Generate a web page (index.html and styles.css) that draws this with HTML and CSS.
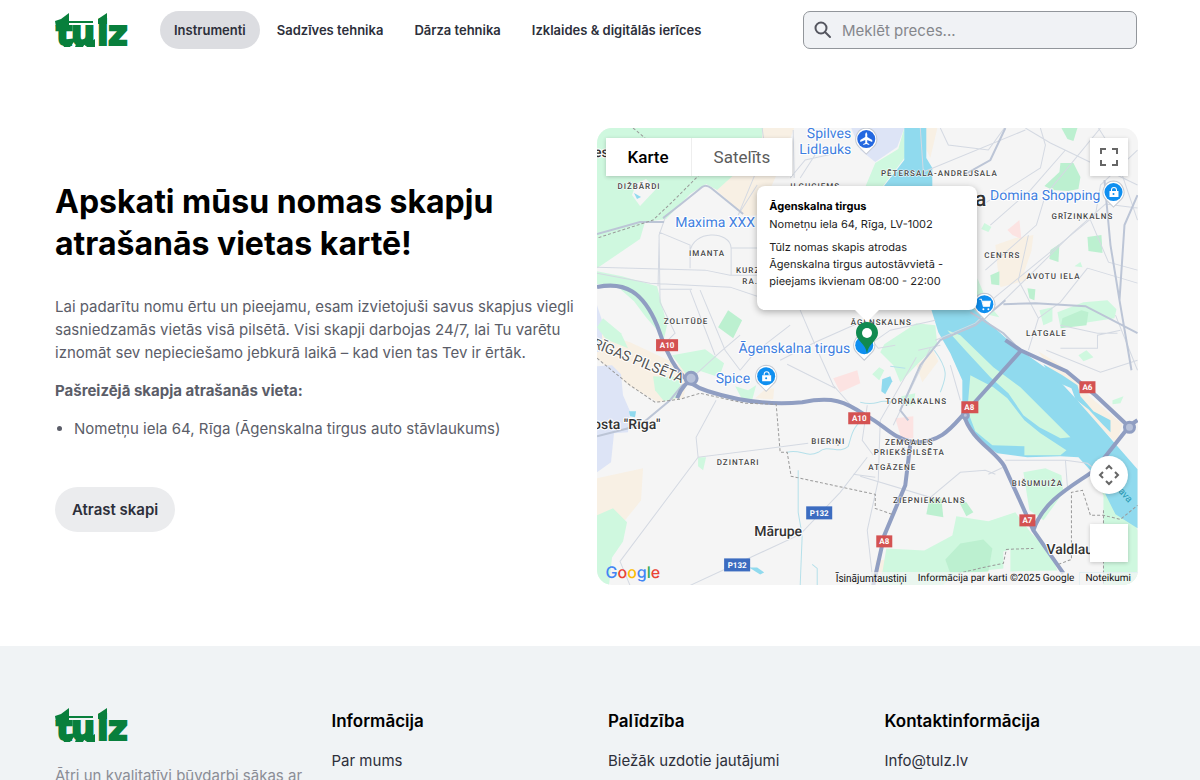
FILE: index.html
```
<!DOCTYPE html>
<html lang="lv">
<head>
    <meta charset="utf-8">
    <title>Tūlz</title>
    <meta name="viewport" content="width=device-width, initial-scale=1.0">
    <link rel="stylesheet" href="styles.css">
</head>
<body>
    <svg class="defs" width="0" height="0" aria-hidden="true">
        <symbol id="logo" viewBox="0 0 76 36">
            <text class="logo-text" x="1 16 42 53" y="33">tulz</text>
            <path d="M0 9 L6 7 L14 1 V9 H38 V11 H14 V15 H1 Z M43 7 L52 1 V12 H43 Z M6 28 L22 26 L15 35 H9 Z M22 30 L32 26 L28 35 H20 Z M30 33 L40 27 V35 H32Z"/>
        </symbol>
        <symbol id="poi" viewBox="0 0 24 28">
            <path class="poi-edge" d="M12 1 a11 11 0 0 1 7 19 L12 27 L5 20 A11 11 0 0 1 12 1Z"/>
            <circle cx="12" cy="12" r="9"/>
        </symbol>
    </svg>

    <header class="header">
        <a class="logo" href="#" aria-label="Tūlz"><svg width="76" height="36"><use href="#logo"/></svg></a>
        <nav class="nav">
            <a class="active" href="#">Instrumenti</a>
            <a href="#">Sadzīves tehnika</a>
            <a href="#">Dārza tehnika</a>
            <a href="#">Izklaides &amp; digitālās ierīces</a>
        </nav>
        <label class="search">
            <svg width="18" height="18" viewBox="0 0 18 18"><circle cx="7" cy="7" r="5.5"/><path d="M11 11 L16 16"/></svg>
            <input type="text" placeholder="Meklēt preces..." aria-label="Meklēt preces">
        </label>
    </header>

    <main class="locker">
        <div class="locker-text">
            <h1>Apskati mūsu nomas skapju atrašanās vietas kartē!</h1>
            <p>Lai padarītu nomu ērtu un pieejamu, esam izvietojuši savus skapjus viegli sasniedzamās vietās visā pilsētā. Visi skapji darbojas 24/7, lai Tu varētu iznomāt sev nepieciešamo jebkurā laikā – kad vien tas Tev ir ērtāk.</p>
            <p><strong>Pašreizējā skapja atrašanās vieta:</strong></p>
            <ul>
                <li>Nometņu iela 64, Rīga (Āgenskalna tirgus auto stāvlaukums)</li>
            </ul>
            <button class="find" type="button">Atrast skapi</button>
        </div>

        <div class="map">
            <svg class="map-canvas" viewBox="597 128 541 457">
                <!-- built-up, sand and airport areas -->
                <g class="sand">
                    <path d="M745 128 H794 L775 178 L758 215 L745 216 L716 190 Z"/>
                    <path d="M597 332 L630 342 L690 370 L683 398 L658 402 L630 386 L597 358Z"/>
                    <path d="M597 478 L643 468 L641 500 L625 520 L597 520Z"/>
                    <path d="M995 245 L1015 238 L1033 235 L1031 251 L1024 271 L1027 280 L1000 287 L997 266Z"/>
                    <path d="M920 128 H937 L930 158 L924 145Z"/>
                    <path d="M916 365 L933 350 L938 361 L922 382Z"/>
                    <path d="M969 404 L982 401 L987 417 L978 423Z"/>
                    <path d="M1038 351 L1060 365 L1078 382 L1090 397 L1122 424 L1116 443 L1098 425 L1082 406 L1074 391 L1054 374Z"/>
                    <path d="M765 389 L774 388 L773 399 L755 398Z"/>
                    <path d="M875 560 L887 559 L888 574 L876 575Z"/>
                </g>
                <g class="airport">
                    <path d="M597 366 L612 365 L621 374 L623 395 L630 411 L628 432 L614 433 L611 462 L597 472Z"/>
                    <path d="M851 128 H904 L897 147 L875 162 L860 150Z"/>
                    <path d="M597 305 L602 320 L602 350 L597 352Z"/>
                </g>
                <g class="red-area">
                    <path d="M833 378 L857 370 L860 383 L840 392Z"/>
                    <path d="M895 418 L913 416 L913 438 L901 438Z"/>
                    <path d="M1007 230 L1019 220 L1021 239 L1012 235Z"/>
                </g>

                <!-- parks and forests -->
                <g class="green">
                    <path d="M597 128 H763 L758 168 L738 171 L717 190 L706 184 L690 194 L666 219 L645 222 L640 239 L618 254 L597 268Z"/>
                    <path d="M597 271 L622 276 L657 286 L667 325 L664 338 L646 317 L634 301 L617 286 L597 284Z"/>
                    <path d="M603 318 L621 333 L628 348 L606 339 L597 327Z"/>
                    <path d="M672 355 L705 349 L724 363 L719 377 L701 371 L686 374Z"/>
                    <path d="M653 376 L681 377 L679 397 L664 401 L655 390Z"/>
                    <path d="M735 386 L748 390 L756 385 L752 400 L742 399Z"/>
                    <path d="M698 457 L706 457 L703 470 L698 466Z"/>
                    <path d="M597 515 L613 508 L627 522 L623 541 L612 557 L609 585 H597Z"/>
                    <path d="M904 128 L905 157 L882 187 L865 187 L875 163 L898 149Z"/>
                    <path d="M984 223 L991 227 L988 232 L981 229Z"/>
                    <path d="M1074 266 L1080 262 L1082 267Z"/>
                    <path d="M1057 312 L1083 302 L1107 300 L1116 309 L1114 318 L1088 322 L1060 327Z"/>
                    <path d="M1039 310 L1052 307 L1052 321 L1043 325Z"/>
                    <path d="M1078 355 L1086 350 L1093 357 L1083 361Z"/>
                    <path d="M1112 400 L1123 396 L1120 403 L1112 404Z"/>
                    <path d="M977 278 L988 304 L999 317 L972 311 L977 290Z"/>
                    <path d="M884 344 L916 323 L935 325 L937 345 L918 363 L900 382 L893 365 L880 352Z"/>
                    <path d="M872 374 L879 367 L884 370 L879 380Z"/>
                    <path d="M955 329 L965 328 L962 338Z"/>
                    <path d="M901 396 L915 393 L913 405 L902 405Z"/>
                    <path d="M1023 472 L1045 468 L1061 475 L1063 492 L1043 520 L1029 510Z"/>
                    <path d="M886 548 L924 550 L952 535 L956 516 L988 521 L1015 512 L1031 533 L1050 552 L1057 570 L1010 571 L1010 549 L1003 551 L1003 568 L984 570 L968 566 L942 585 H880Z"/>
                    <path d="M1090 470 L1106 486 L1128 508 L1137 530 V585 H1103 V495Z"/>
                </g>
                <g class="green-dark">
                    <path d="M728 310 L742 320 L733 338 L718 327Z"/>
                    <path d="M1061 128 H1077 L1073 141 L1067 139Z"/>
                    <path d="M1044 186 L1059 172 L1060 163 L1073 163 L1080 177 L1078 189 L1068 191 L1052 190Z"/>
                    <path d="M1087 237 L1101 235 L1102 253 L1088 251Z"/>
                    <path d="M1050 250 L1059 244 L1058 262 L1049 259Z"/>
                    <path d="M990 275 L999 271 L999 285 L991 284Z"/>
                    <path d="M1027 288 L1035 289 L1034 300 L1029 298Z"/>
                    <path d="M945 559 L960 543 L983 539 L992 548 L988 571 L950 573Z"/>
                    <path d="M929 499 L941 498 L943 517 L926 514Z"/>
                    <path d="M959 502 L966 502 L973 512 L966 516Z"/>
                    <path d="M1062 318 L1081 310 L1088 312 L1086 325 L1060 328Z"/>
                </g>
                <path class="white-area" d="M636 184 L646 179 L656 189 L640 206 L632 195Z"/>

                <!-- Daugava -->
                <g class="water">
                    <path d="M904 128 H926 L926 158 L932 168 V187 H883 L904 160Z"/>
                    <path d="M930 306 H970 L1008 340 L1020 350 L1050 371 L1075 398 L1137 469 V528 L1115 514 L1097 478 L1078 457 L1060 456 L1027 457 L997 453 L979 442 L966 421 L962 404 L962 380 L950 353 L938 332Z"/>
                    <path d="M1043 364 L1062 375 L1077 385 L1080 396 L1093 411 L1110 420 L1110 432 L1102 424 L1088 409 L1075 399 L1071 388 L1052 380Z"/>
                    <path d="M882 379 L890 376 L892 381 L885 394 L881 391Z"/>
                    <path d="M629 411 L636 411 L635 417 L630 416Z"/>
                    <path d="M749 567 L757 567 L764 572 L760 574Z"/>
                    <path d="M634 193 L641 197 L637 199Z"/>
                </g>
                <g class="island">
                    <path d="M947 330 L960 335 L993 367 L1020 387 L1070 437 L1060 438 L1039 427 L1023 415 L1008 393 L990 377 L965 350Z"/>
                    <path d="M970 375 L993 387 L1007 398 L1024 420 L1040 433 L1066 450 L1060 455 L1024 455 L1024 446 L992 445 L975 431 L967 410Z"/>
                </g>
                <g class="stream">
                    <path d="M787 452 C800 448 806 458 818 452 C829 443 838 455 848 446 C852 435 850 427 870 413 M798 470 V512 L802 535 L800 585 M812 564 L817 568 V585"/>
                    <path d="M860 402 C880 407 875 397 895 403 M934 350 C950 372 945 378 940 392 M1079 585 V572 H1137"/>
                    <path d="M890 366 L905 368"/>
                </g>

                <!-- streets -->
                <g class="street">
                    <path d="M658 350 L675 333 L660 302 L659 235 L665 218 M659 232 L690 245 V268 M690 268 V252 C692 230 730 230 731 248 V275 M597 267 L705 270 L730 275 H757 M597 273 L650 283 L730 287 L760 297 M659 240 L658 286 M731 248 H757 M660 289 H692 M690 290 L715 355 M700 290 L725 350 L740 370"/>
                    <path d="M762 128 L765 150 L738 215 M738 215 L757 185 M790 178 L805 160 L850 150 M793 130 L794 178 M800 178 L818 150"/>
                    <path d="M685 384 L720 352 L740 335 M740 370 L755 352 L790 325 M780 360 L815 342 L860 322 M800 310 L815 345 L833 385 L855 410 M787 364 L815 378 L835 388 M857 322 L878 348 L895 345 M860 351 L890 330 L935 320"/>
                    <path d="M716 400 L696 437 L698 457 L808 443 M698 457 L620 561 L630 585 M867 457 L840 492 L800 534 L690 585 M867 405 L862 440 L873 455 M853 474 L875 477 M860 476 L930 497 L960 472 L985 470 L995 474"/>
                    <path d="M920 128 L923 172 L1025 130 M940 128 L948 145 L988 150 L1004 128 M1040 128 L1045 145 L1040 168 L980 206 M1065 150 L1030 190 L990 225 M1100 128 L1045 195 L1036 225 L985 270 M1025 128 L1050 143 L1137 185 M1137 150 L1100 185 L1095 215 L985 305"/>
                    <path d="M1098 128 L1115 155 L1137 220 M1137 208 L1105 204 L1072 233 L1000 304 M1090 220 L1108 262 L1137 270 M1087 268 L1060 302 L1038 318 M1087 268 L1137 283 M1028 235 L1018 280 L1038 318 L1028 350 M1060 325 L1097 333 H1117 M1060 348 H1097 V335 L1120 330 M1115 315 L1137 370 M1046 350 L1100 372 L1137 360"/>
                    <path d="M1005 460 H1065 L1087 463 L1097 471 M988 474 L1005 466 M1067 487 L1065 460 M930 348 L893 425 M916 357 L880 420 L878 480 L867 530 L872 575 M950 365 L960 400 M940 345 L918 350 M935 340 L975 323 L995 304"/>
                </g>
                <g class="street wide">
                    <path d="M663 218 Q680 205 702 187 Q706 184 711 188 L743 214 M597 234 L640 222 H664 M597 436 L640 425 L670 400 L683 384 M1003 304 L1035 303 L1085 306 L1137 333 M1005 128 L990 160 L965 174 M1104 180 L1110 245 L1119 300 L1131 370 M1137 195 L1124 225 L1119 300"/>
                    <path d="M908 420 L900 410 L920 365 L940 340 L975 325 L1005 300 M1020 350 L1003 333 L970 312"/>
                </g>
                <g class="highway">
                    <path d="M597 287 C625 281 643 292 657 325 C669 361 681 383 708 391 C745 403 780 404 802 402 C832 396 845 401 865 415 C885 425 890 437 913 442 C945 443 955 421 970 407 L1021 350"/>
                    <path d="M910 444 L905 485 L884 535 L873 585 M963 413 C970 440 995 450 1004 466 L1033 530 L1063 573 M1033 530 C1043 499 1075 484 1094 470 L1128 427"/>
                    <path d="M1005 340 L1020 350 L1066 371 L1095 395 L1128 426 L1137 420 M677 398 C682 385 690 380 696 375"/>
                </g>
                <circle class="roundabout" cx="691" cy="378" r="6"/>
                <circle class="roundabout" cx="1129" cy="427" r="5"/>
                <circle class="roundabout" cx="965" cy="415" r="3"/>

                <!-- municipality borders -->
                <g class="border">
                    <path d="M633 128 L645 138 M700 174 L672 202 L653 220 L597 238 M597 358 L630 385 L655 402 L680 399 L700 393 L745 403 L776 404 L780 452 L787 452 L791 476 L875 494 V508 L892 514"/>
                    <path d="M958 573 L983 567 L1003 563 L1006 549 L1033 548 M1058 564 L1071 559 V492 L1082 490 L1090 515 H1103 L1120 519 L1137 505"/>
                    <path d="M1103 510 V585"/>
                </g>

                <g class="area">
                    <text x="639" y="189">DIŽBĀRDI</text>
                    <text x="815" y="189">IĻĢUCIEMS</text>
                    <text x="707" y="256">IMANTA</text>
                    <text x="748" y="273">KURZ</text>
                    <text x="750" y="284">RA.</text>
                    <text x="686" y="324">ZOLITŪDE</text>
                    <text x="881" y="325">ĀGENSKALNS</text>
                    <text x="939" y="176">PĒTERSALA-ANDREJSALA</text>
                    <text x="1082" y="219">GRĪZIŅKALNS</text>
                    <text x="1002" y="258">CENTRS</text>
                    <text x="1053" y="279">AVOTU IELA</text>
                    <text x="1046" y="336">LATGALE</text>
                    <text x="916" y="404">TORŅAKALNS</text>
                    <text x="909" y="445">ZEMGALES</text>
                    <text x="909" y="455">PRIEKŠPILSĒTA</text>
                    <text x="892" y="470">ATGĀZENE</text>
                    <text x="929" y="503">ZIEPNIEKKALNS</text>
                    <text x="1037" y="486">BIŠUMUIŽA</text>
                    <text x="828" y="444">BIERIŅI</text>
                    <text x="738" y="465">DZINTARI</text>
                </g>
                <g class="town">
                    <text x="754" y="536">Mārupe</text>
                    <text x="1046" y="554">Valdlauči</text>
                    <text x="593" y="429">osta "Rīga"</text>
                    <text x="594" y="157">es</text>
                    <text class="city" x="944" y="206">Rīga</text>
                    <text class="region" transform="translate(592 347) rotate(22)">RĪGAS PILSĒTA</text>
                    <text class="river" transform="translate(1102 474) rotate(48)">Daugava</text>
                </g>
                <g class="place">
                    <text x="851" y="138">Spilves</text>
                    <text x="851" y="154">Lidlauks</text>
                    <text x="755" y="227">Maxima XXX</text>
                    <text x="1100" y="200">Domina Shopping</text>
                    <text x="850" y="353">Āgenskalna tirgus</text>
                    <text x="750" y="383">Spice</text>
                </g>

                <g class="shield">
                    <rect x="656" y="339" width="22" height="12"/><text x="667" y="348">A10</text>
                    <rect x="848" y="412" width="22" height="12"/><text x="859" y="421">A10</text>
                    <rect x="961" y="401" width="17" height="12"/><text x="969" y="410">A8</text>
                    <rect x="1079" y="381" width="16" height="12"/><text x="1087" y="390">A6</text>
                    <rect x="1019" y="514" width="16" height="12"/><text x="1027" y="523">A7</text>
                    <rect x="876" y="535" width="16" height="12"/><text x="884" y="544">A8</text>
                    <g class="regional">
                        <rect x="806" y="506" width="26" height="13"/><text x="819" y="516">P132</text>
                        <rect x="724" y="558" width="26" height="13"/><text x="737" y="568">P132</text>
                    </g>
                </g>

                <g class="poi">
                    <use class="poi-airport" href="#poi" x="854" y="127" width="24" height="28"/>
                    <path d="M866 132 l1 2 v3 l5 3 v2 l-5 -2 v3 l2 1 v1 l-3 -1 l-3 1 v-1 l2 -1 v-3 l-5 2 v-2 l5 -3 v-3Z"/>
                    <use href="#poi" x="1101" y="180" width="24" height="28"/>
                    <path d="M1109 191 h9 v6 h-9Z"/><path class="poi-line" d="M1111 191 v-1 a2 2 0 0 1 5 0 v1"/><circle class="poi-dot" cx="1113" cy="194" r="1"/>
                    <use href="#poi" x="754" y="364" width="24" height="28"/>
                    <path d="M762 375 h9 v6 h-9Z"/><path class="poi-line" d="M764 375 v-1 a2 2 0 0 1 5 0 v1"/><circle class="poi-dot" cx="766" cy="378" r="1"/>
                    <use href="#poi" x="972" y="292" width="24" height="28"/>
                    <path class="poi-line" d="M979 299 h2 l2 7 h6 l1 -5 h-8"/><path d="M982 301 h8 l-1 5 h-6Z"/><circle class="poi-wheel" cx="983" cy="309" r="1"/><circle class="poi-wheel" cx="988" cy="309" r="1"/>
                    <use href="#poi" x="852" y="333" width="24" height="28"/>
                </g>
            </svg>

            <svg class="pin" width="24" height="34" viewBox="0 0 24 34"><path d="M12 1 C5 1 1 6 1 12 C1 20 11 22 12 33 C13 22 23 20 23 12 C23 6 19 1 12 1Z"/><circle cx="12" cy="12" r="5"/></svg>

            <div class="info">
                <strong>Āgenskalna tirgus</strong>
                <div>Nometņu iela 64, Rīga, LV-1002</div>
                <p>Tūlz nomas skapis atrodas Āgenskalna tirgus autostāvvietā - pieejams ikvienam 08:00 - 22:00</p>
            </div>

            <div class="map-type">
                <button class="selected" type="button">Karte</button>
                <button type="button">Satelīts</button>
            </div>
            <button class="control fullscreen" type="button" aria-label="Pilnekrāns">
                <svg width="20" height="20" viewBox="0 0 20 20"><path d="M2 7 V2 H7 M13 2 H18 V7 M18 13 V18 H13 M7 18 H2 V13"/></svg>
            </button>
            <button class="control camera" type="button" aria-label="Kartes kamera">
                <svg width="22" height="22" viewBox="0 0 22 22"><path d="M8 5 L11 2 L14 5 M17 8 L20 11 L17 14 M14 17 L11 20 L8 17 M5 14 L2 11 L5 8"/></svg>
            </button>
            <div class="control pegman"></div>

            <div class="google"><span class="b">G</span><span class="r">o</span><span class="y">o</span><span class="b">g</span><span class="g">l</span><span class="r">e</span></div>
            <div class="attribution">
                <button type="button">Īsinājumtaustiņi</button>
                <span>Informācija par karti ©2025 Google</span>
                <a href="#">Noteikumi</a>
            </div>
        </div>
    </main>

    <footer class="footer">
        <div>
            <a class="logo" href="#" aria-label="Tūlz"><svg width="76" height="36"><use href="#logo"/></svg></a>
            <p class="slogan">Ātri un kvalitatīvi būvdarbi sākas ar</p>
        </div>
        <div>
            <h2>Informācija</h2>
            <a href="#">Par mums</a>
        </div>
        <div>
            <h2>Palīdzība</h2>
            <a href="#">Biežāk uzdotie jautājumi</a>
        </div>
        <div>
            <h2>Kontaktinformācija</h2>
            <a href="#">Info@tulz.lv</a>
        </div>
    </footer>
</body>
</html>
```
FILE: styles.css
```
* {
    box-sizing: border-box;
}
body {
    margin: 0;
    font-family: Inter, sans-serif;
    font-size: 15px;
    color: #2d2f3a;
    background-color: #fff;
    overflow-x: hidden;
}
a {
    color: inherit;
    text-decoration: none;
}
button {
    border: none;
    font-family: inherit;
    color: inherit;
    cursor: pointer;
}
.defs {
    position: absolute;
}

/* header */
.header {
    display: flex;
    align-items: center;
    height: 60px;
    padding: 0 63px 0 55px;
}
.logo {
    display: block;
    height: 36px;
    fill: #087f3c;
}
.logo-text {
    font-family: "DejaVu Sans", sans-serif;
    font-size: 34px;
    font-weight: bold;
    stroke: #087f3c;
    stroke-width: 2px;
}
.nav {
    display: flex;
    gap: 3px;
    margin-left: 29px;
    font-size: 13px;
    font-weight: 600;
    white-space: nowrap;
}
.nav a {
    padding: 0 14px;
    line-height: 38px;
    border-radius: 19px;
}
.nav .active {
    background-color: #dcdde1;
}
.search {
    display: flex;
    align-items: center;
    gap: 8px;
    width: 334px;
    height: 38px;
    margin-left: auto;
    padding: 0 10px;
    border: 1px solid #92969b;
    border-radius: 7px;
    background-color: #f0f2f5;
}
.search svg {
    fill: none;
    stroke: #54565f;
    stroke-width: 2px;
    stroke-linecap: round;
}
.search input {
    flex: 1;
    min-width: 0;
    border: none;
    background: none;
    font-family: inherit;
    font-size: 15px;
    outline: none;
}
.search input::placeholder {
    color: #85878c;
}

/* text + map */
.locker {
    display: grid;
    grid-template-columns: 1fr 1fr;
    align-items: center;
    padding: 68px 62px 61px 55px;
}
.locker-text {
    padding-right: 20px;
    color: #5b5d68;
    line-height: 23px;
}
.locker-text h1 {
    max-width: 460px;
    margin: 0 0 30px;
    font-size: 32px;
    line-height: 42px;
    font-weight: 700;
    color: #000;
}
.locker-text p {
    margin: 0 0 15px;
}
.locker-text ul {
    margin: 0 0 47px;
    padding-left: 19px;
}
.find {
    height: 45px;
    padding: 0 17px;
    border-radius: 23px;
    background-color: #ebecee;
    color: #2d2f3a;
    font-size: 15px;
    font-weight: 600;
}
.map {
    position: relative;
    overflow: hidden;
    border-radius: 15px;
    background-color: #f5f5f5;
    font-family: Roboto, sans-serif;
    text-rendering: geometricPrecision;
}
.map-canvas {
    display: block;
    width: 100%;
}

/* map drawing */
.sand { fill: #f8f0e4; }
.airport { fill: #dde4f6; }
.red-area { fill: #fce3e2; }
.green { fill: #cff8df; }
.green-dark { fill: #bcf0d0; }
.island { fill: #d0f7df; }
.white-area { fill: #f5f5f5; }
.water { fill: #90daee; }
.stream {
    fill: none;
    stroke: #b5e0ea;
    stroke-width: 1px;
}
.street {
    fill: none;
    stroke: #d4d9e2;
    stroke-width: 1px;
}
.street.wide {
    stroke: #bcc5d6;
    stroke-width: 2px;
}
.highway {
    fill: none;
    stroke: #909ec2;
    stroke-width: 4px;
    stroke-linejoin: round;
}
.roundabout {
    fill: #b7c1d9;
    stroke: #909ec2;
    stroke-width: 3px;
}
.border {
    fill: none;
    stroke: #9a9a9a;
    stroke-width: 1px;
    stroke-dasharray: 3 2;
}
.area text,
.town text,
.place text {
    paint-order: stroke;
    stroke: #fff;
    stroke-width: 2px;
    stroke-linejoin: round;
}
.area {
    font-size: 8px;
    font-weight: 500;
    letter-spacing: 1px;
    text-anchor: middle;
    fill: #444;
}
.area text {
    stroke-width: 1px;
}
.town {
    font-size: 14px;
    font-weight: 500;
    fill: #333;
}
.town .city {
    font-size: 21px;
}
.town .region {
    font-weight: 400;
    fill: #555;
}
.town .river {
    font-size: 10px;
    font-weight: 400;
    fill: #2a9bb5;
    stroke: none;
}
.place {
    font-size: 14px;
    text-anchor: end;
    fill: #3f7fe0;
}
.shield {
    fill: #d45252;
    font-size: 8px;
    font-weight: 700;
    text-anchor: middle;
}
.shield .regional {
    fill: #3c6cc0;
}
.shield text {
    fill: #fff;
}
.poi {
    fill: #fff;
}
.poi use {
    fill: #0f8ff0;
}
.poi .poi-airport {
    fill: #2468e0;
}
.poi-edge {
    fill: #fff;
    stroke: #c5cad2;
    stroke-width: 1px;
}
.poi-line {
    fill: none;
    stroke: #fff;
}
.poi-dot {
    fill: #0f8ff0;
}

/* over the map */
.pin {
    position: absolute;
    left: 50%;
    top: 193px;
    margin-left: -12px;
    fill: #118a50;
}
.pin circle {
    fill: #fff;
}
.info {
    position: absolute;
    left: 50%;
    top: 58px;
    width: 220px;
    height: 124px;
    margin-left: -110px;
    padding: 11px 12px;
    border-radius: 8px;
    background-color: #fff;
    box-shadow: 0 2px 7px rgba(0, 0, 0, 0.3);
    font-family: Inter, sans-serif;
    font-size: 11px;
    line-height: 18px;
    color: #222;
    white-space: nowrap;
}
.info::after {
    content: "";
    position: absolute;
    left: 98px;
    top: 124px;
    border: 12px solid transparent;
    border-top-color: #fff;
    border-bottom: none;
}
.info strong {
    color: #000;
}
.info p {
    margin: 6px 0 0;
    line-height: 17px;
    white-space: normal;
}
.map-type {
    position: absolute;
    left: 9px;
    top: 10px;
    display: flex;
    box-shadow: 0 1px 4px rgba(0, 0, 0, 0.2);
}
.map-type button {
    height: 38px;
    padding: 0 22px;
    background-color: #fff;
    font-size: 17px;
    color: #5c5c5c;
}
.map-type .selected {
    border-right: 1px solid #eee;
    font-weight: 500;
    color: #000;
}
.control {
    position: absolute;
    right: 10px;
    width: 38px;
    height: 38px;
    padding: 0;
    background-color: #fff;
    box-shadow: 0 1px 4px rgba(0, 0, 0, 0.2);
}
.control svg {
    display: block;
    margin: auto;
    fill: none;
    stroke: #666;
    stroke-width: 2px;
}
.fullscreen {
    top: 10px;
}
.camera {
    bottom: 91px;
    border-radius: 50%;
}
.pegman {
    bottom: 23px;
}
.google {
    position: absolute;
    left: 9px;
    bottom: 3px;
    font-family: Inter, sans-serif;
    font-size: 16px;
    line-height: 20px;
    font-weight: 500;
}
.b { color: #4285f4; }
.r { color: #ea4335; }
.y { color: #fbbc05; }
.g { color: #34a853; }
.attribution {
    position: absolute;
    right: 0;
    bottom: 0;
    display: flex;
    gap: 11px;
    padding: 0 7px 0 2px;
    background-color: rgba(245, 245, 245, 0.7);
    font-size: 10px;
    line-height: 13px;
    color: #111;
    white-space: nowrap;
}
.attribution button {
    padding: 0;
    background: none;
    font-size: 10px;
}

/* footer */
.footer {
    display: grid;
    grid-template-columns: repeat(4, 1fr);
    gap: 22px;
    padding: 61px 61px 40px 55px;
    background-color: #f0f3f5;
    white-space: nowrap;
}
.footer h2 {
    margin: 2px 0 16px;
    font-size: 17px;
    line-height: 24px;
    font-weight: 600;
    color: #000;
}
.footer a {
    line-height: 24px;
}
.slogan {
    margin: 21px 0 0;
    line-height: 24px;
    color: #8b8d96;
}
```
